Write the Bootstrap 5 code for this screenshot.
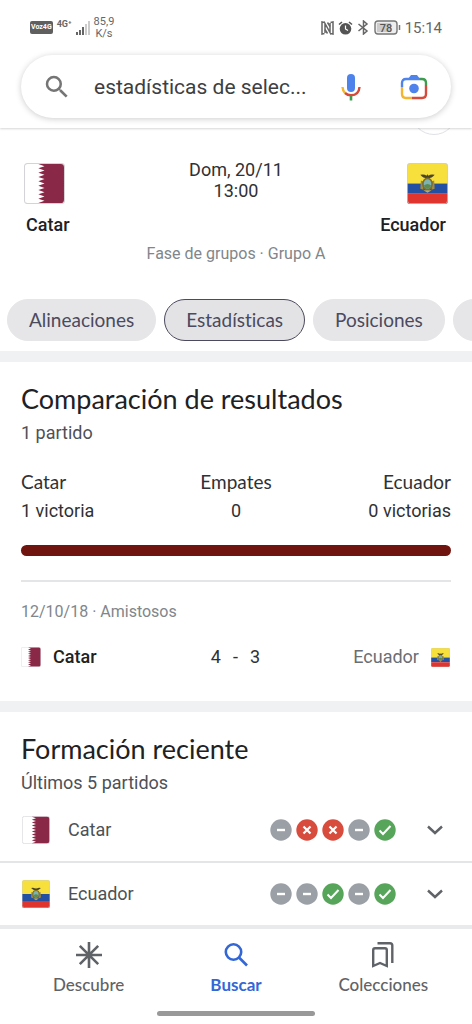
<!DOCTYPE html>
<html lang="es">
<head>
<meta charset="utf-8">
<meta name="viewport" content="width=device-width, initial-scale=1">
<title>Catar - Ecuador: estadísticas</title>
<link href="https://cdn.jsdelivr.net/npm/bootstrap@5.3.0/dist/css/bootstrap.min.css" rel="stylesheet">
<script src="https://cdn.jsdelivr.net/npm/bootstrap@5.3.0/dist/js/bootstrap.bundle.min.js" defer></script>
<style>
  :root { --ink: #202124; --soft: #4d5156; --mute: #80868b; --line: #dfe1e5; --band: #f0f1f3; }
  body { font-family: Roboto, "Liberation Sans", sans-serif; font-size: 18px; line-height: 24px; color: #303134; background: #fff; }
  svg { display: block; flex: none; }
  .geo { font-family: Lato, Roboto, sans-serif; font-size: 19px; font-variant-ligatures: none; }
  .status-bar { height: 55px; padding: 0 30px; color: #666; font-size: 15px; }
  .volte { background: #5f5f5f; color: #fff; font: 700 7px/13px Roboto, sans-serif; border-radius: 2px; padding: 0 1px; }
  .rate { font-size: 11px; line-height: 12px; text-align: center; }
  .net { font: 700 9px/9px Roboto, sans-serif; padding-bottom: 6px; }
  .top-bar { box-shadow: 0 1px 2px rgba(0,0,0,.16); position: relative; z-index: 1; padding-bottom: 10px; }
  .search-pill { height: 63px; margin: 0 21px; border-radius: 32px; padding: 0 23px 0 21px; box-shadow: 0 1px 6px rgba(0,0,0,.2); color: #757575; }
  .search-pill input { font-size: 21px; color: #3c4043; min-width: 0; padding: 0; border: 0; background: none; margin: 0 16px 0 22px; }
  .plain-btn { border: 0; background: none; padding: 0; }
  .camera { margin-left: 39px; }
  .match-head { padding: 31px 24px 0; overflow: hidden; position: relative; }
  .peek { position: absolute; right: 15px; top: -39px; width: 46px; height: 46px; border: 1px solid var(--line); border-radius: 50%; background: #fff; }
  .when { line-height: 21px; }
  .team { font-weight: 500; color: var(--ink); }
  .match-head .team { padding: 9px 2px 0; }
  .stage { font-size: 16px; color: var(--mute); }
  .match-head .stage { margin-top: 5px; }
  .chips { padding: 33px 0 10px 7px; overflow: hidden; }
  .chip { flex: none; height: 42px; border: 1px solid #e6e6e8; border-radius: 21px; padding: 0 21px; background: #e6e6e8; color: #4b4a5e; }
  .chip.active { border-color: #4b4a5e; background: #e3e3e6; }
  .band { height: 11px; background: var(--band); }
  .panel { padding: 21px 21px 0; }
  .title { font-size: 27px; line-height: 32px; color: var(--ink); margin: 0 0 6px; font-weight: 400; }
  .sub { color: var(--soft); }
  .tally { padding-top: 25px; }
  .tally .geo { margin-bottom: 5px; }
  .wins { height: 11px; border-radius: 6px; background: #6f140e; margin: 22px 0 24px; }
  .rule { border-top: 2px solid #e4e5e7; margin-bottom: 18px; }
  .result { padding: 21px 1px 32px 0; }
  .result .d-flex { gap: 12px; }
  .lost { color: #6b6e73; }
  .form-list { padding: 4px 0 0; margin: 0; list-style: none; }
  .form-list li { height: 62px; padding: 0 29px 0 22px; gap: 18px; }
  .form-list li + li { height: 64px; border-top: 2px solid #e4e5e7; }
  .marks { gap: 4px; margin-right: 13px; }
  .tab-bar { border-top: 4px solid #e9eaec; padding: 12px 15px 16px; }
  .tab-bar a { flex: 1 1 0; gap: 6px; color: #5f6368; font-size: 17px; line-height: 20px; font-weight: 500; text-decoration: none; }
  .tab-bar a.active { color: #3367d6; font-weight: 700; }
  .grip { width: 33.5%; height: 5px; border-radius: 3px; background: #999; }
</style>
</head>
<body>
<svg width="0" height="0" class="position-absolute" aria-hidden="true">
  <symbol id="qatar" viewBox="0 0 40 40">
    <rect x=".5" y=".5" width="39" height="39" rx="3" fill="#fff" stroke="#d4d4d8"/>
    <path d="M14 1H36Q39 1 39 4V36Q39 39 36 39H14L20 36.900 14 34.800 20 32.700 14 30.600 20 28.500 14 26.400 20 24.300 14 22.200 20 20 14 17.800 20 15.700 14 13.600 20 11.500 14 9.400 20 7.300 14 5.200 20 3.100Z" fill="#8a2848"/>
  </symbol>
  <symbol id="ecuador" viewBox="0 0 40 40">
    <path d="M0 20V3Q0 0 3 0H37Q40 0 40 3V20Z" fill="#f7e03c"/>
    <path d="M0 20H40V30H0Z" fill="#2450a4"/>
    <path d="M0 30H40V37Q40 40 37 40H3Q0 40 0 37Z" fill="#e0342f"/>
    <rect x=".5" y=".5" width="39" height="39" rx="3" fill="none" stroke="#ccc" stroke-opacity=".7"/>
    <path d="M13 11.500Q17 10.500 19 12.500L20 11L21 12.500Q23 10.500 27 11.500Q24.500 15 20 15Q15.500 15 13 11.500Z" fill="#4c4426"/>
    <path d="M13.500 17L16 18V26L13 25ZM26.500 17L24 18V26L27 25Z" fill="#a08a3c"/>
    <ellipse cx="20" cy="20.500" rx="4.500" ry="5.500" fill="#7fb3b0" stroke="#7c6d35" stroke-width="1.600"/>
    <path d="M16.500 22Q20 19 23.500 22Q22.500 25 20 25Q17.500 25 16.500 22Z" fill="#5d8a4d"/>
    <path d="M16 26.500H24L20 29Z" fill="#c6a94a"/>
  </symbol>
  <symbol id="lens" viewBox="0 0 24 24"><path fill="currentColor" d="M15.500 14h-.79l-.28-.27A6.470 6.470 0 0 0 16 9.500 6.500 6.500 0 1 0 9.500 16c1.610 0 3.090-.59 4.230-1.570l.27.28v.79l5 4.990L20.490 19l-4.990-5zm-6 0a4.500 4.500 0 1 1 0-9 4.500 4.500 0 0 1 0 9z"/></symbol>
  <symbol id="draw" viewBox="0 0 22 22"><circle cx="11" cy="11" r="10.700" fill="#9aa0a6"/><path d="M7 11H15" stroke="#fff" stroke-width="2.400"/></symbol>
  <symbol id="loss" viewBox="0 0 22 22"><circle cx="11" cy="11" r="10.700" fill="#d84c3e"/><path d="M7.500 7.500L14.500 14.500M14.500 7.500L7.500 14.500" stroke="#fff" stroke-width="2.200"/></symbol>
  <symbol id="win" viewBox="0 0 22 22"><circle cx="11" cy="11" r="10.700" fill="#57a55a"/><path d="M5.500 11.500L9 15L16.500 7" fill="none" stroke="#fff" stroke-width="2"/></symbol>
  <symbol id="down" viewBox="0 0 16 10"><path d="M1 1.500L8 8L15 1.500" fill="none" stroke="#5f6368" stroke-width="2.400"/></symbol>
</svg>

<header class="top-bar bg-white">
  <div class="status-bar d-flex justify-content-between align-items-center">
    <div class="d-flex align-items-center gap-1">
      <span class="volte">Voz4G</span>
      <span class="net">4G⁺</span>
      <svg width="14" height="14" viewBox="0 0 14 14"><path d="M0 11h2v3H0zM3 9h2v5H3zM6 6h2v8H6z" fill="#666"/><path d="M9 3h2v11H9zM12 0h2v14h-2z" fill="#ccc"/></svg>
      <span class="rate">85,9<br>K/s</span>
    </div>
    <div class="d-flex align-items-center gap-1">
      <svg width="13" height="14" viewBox="0 0 13 14" fill="none" stroke="#666" stroke-width="1.500"><path d="M3.500 1.500L1 1V13L3.500 12.500M9.500 1.500L12 1V13L9.500 12.500M4 12V2.500L9 11.500V2"/><path d="M6.500 1.500L9 5.500M4 8.500L6.500 12.500"/></svg>
      <svg width="15" height="14" viewBox="0 0 15 14"><circle cx="7.500" cy="7.800" r="5.800" fill="#555"/><path d="M1 3.500L4 1M14 3.500L11 1" stroke="#555" stroke-width="1.600"/><path d="M7.500 4.500V8L10 9.500" fill="none" stroke="#fff" stroke-width="1.200"/></svg>
      <svg width="13" height="15" viewBox="0 0 13 15" fill="none" stroke="#666" stroke-width="1.500"><path d="M1.500 4L10 11L6.500 14V1L10 4L1.500 11"/></svg>
      <svg width="27" height="15" viewBox="0 0 27 15"><rect x="1" y="1" width="22" height="13" rx="3" fill="#eee" stroke="#777" stroke-width="1.400"/><path d="M3 3H17V12H3Z" fill="#ccc"/><path d="M25.500 5V10" stroke="#777" stroke-width="1.500"/><text x="12" y="11.500" text-anchor="middle" font-family="Roboto" font-size="11" font-weight="500" fill="#555">78</text></svg>
      <span>15:14</span>
    </div>
  </div>
  <form class="search-pill d-flex align-items-center bg-white" role="search">
    <svg width="30" height="30"><use href="#lens"/></svg>
    <input class="flex-grow-1" type="text" aria-label="Buscar" value="estadísticas de selec...">
    <button class="plain-btn" type="button" aria-label="Buscar por voz">
      <svg width="20" height="28" viewBox="0 0 20 28" fill="none"><rect x="6" y="1" width="8" height="18" rx="4" fill="#4f83ec"/><path d="M1.500 14Q1.800 18 4 20" stroke="#f2b72f" stroke-width="2.400"/><path d="M4 20Q6.500 22.300 10 22.300Q18 22 18.500 14" stroke="#d64a3b" stroke-width="2.400"/><path d="M10 23V27.500" stroke="#3e9b50" stroke-width="2.600"/></svg>
    </button>
    <button class="plain-btn camera" type="button" aria-label="Buscar con la cámara">
      <svg width="28" height="26" viewBox="0 0 28 26" fill="none" stroke-width="2.400"><path d="M2 13V9Q2 5 6 5H20" stroke="#4f83ec"/><path d="M8 5L11 1H17L20 5V6H8Z" fill="#4f83ec"/><path d="M20 5H22Q26 5 26 9V11" stroke="#3e9b50"/><path d="M26 11V20Q26 24 22 24H12" stroke="#d64a3b"/><path d="M2 13V20Q2 24 6 24H12" stroke="#f2b72f"/><circle cx="14" cy="14.500" r="4.800" fill="#4f83ec"/></svg>
    </button>
  </form>
</header>

<main>
  <section class="match-head">
    <div class="peek"></div>
    <div class="row g-0">
      <div class="col-4 pt-1"><svg width="41" height="41"><use href="#qatar"/></svg><div class="team">Catar</div></div>
      <div class="col-4 text-center when">Dom, 20/11<br>13:00</div>
      <div class="col-4 pt-1 d-flex flex-column align-items-end"><svg width="41" height="41"><use href="#ecuador"/></svg><div class="team">Ecuador</div></div>
    </div>
    <div class="stage text-center">Fase de grupos · Grupo A</div>
  </section>

  <nav class="chips d-flex gap-2" aria-label="Secciones">
    <button class="chip geo" type="button">Alineaciones</button>
    <button class="chip geo active" type="button" aria-current="true">Estadísticas</button>
    <button class="chip geo" type="button">Posiciones</button>
    <button class="chip geo" type="button" aria-label="Más"></button>
  </nav>
  <div class="band"></div>

  <section class="panel">
    <h2 class="geo title">Comparación de resultados</h2>
    <div class="sub">1 partido</div>
    <div class="tally row g-0">
      <div class="col-4"><div class="geo">Catar</div><div>1 victoria</div></div>
      <div class="col-4 text-center"><div class="geo">Empates</div><div>0</div></div>
      <div class="col-4 text-end"><div class="geo">Ecuador</div><div>0 victorias</div></div>
    </div>
    <div class="wins"></div>
    <div class="rule"></div>
    <div class="stage">12/10/18 · Amistosos</div>
    <div class="result row g-0 align-items-center">
      <div class="col-4 d-flex align-items-center team"><svg width="20" height="20"><use href="#qatar"/></svg>Catar</div>
      <div class="col-4 d-flex justify-content-center"><span>4</span><span>-</span><span>3</span></div>
      <div class="col-4 d-flex align-items-center justify-content-end lost">Ecuador<svg width="19" height="19"><use href="#ecuador"/></svg></div>
    </div>
  </section>
  <div class="band"></div>

  <section>
    <div class="panel">
      <h2 class="geo title">Formación reciente</h2>
      <div class="sub">Últimos 5 partidos</div>
    </div>
    <ul class="form-list">
      <li class="d-flex align-items-center">
        <svg width="28" height="28"><use href="#qatar"/></svg>
        <span class="sub me-auto">Catar</span>
        <div class="marks d-flex">
          <svg width="22" height="22"><use href="#draw"/></svg>
          <svg width="22" height="22"><use href="#loss"/></svg>
          <svg width="22" height="22"><use href="#loss"/></svg>
          <svg width="22" height="22"><use href="#draw"/></svg>
          <svg width="22" height="22"><use href="#win"/></svg>
        </div>
        <button class="plain-btn" type="button" aria-label="Ver partidos de Catar"><svg width="16" height="10"><use href="#down"/></svg></button>
      </li>
      <li class="d-flex align-items-center">
        <svg width="28" height="28"><use href="#ecuador"/></svg>
        <span class="sub me-auto">Ecuador</span>
        <div class="marks d-flex">
          <svg width="22" height="22"><use href="#draw"/></svg>
          <svg width="22" height="22"><use href="#draw"/></svg>
          <svg width="22" height="22"><use href="#win"/></svg>
          <svg width="22" height="22"><use href="#draw"/></svg>
          <svg width="22" height="22"><use href="#win"/></svg>
        </div>
        <button class="plain-btn" type="button" aria-label="Ver partidos de Ecuador"><svg width="16" height="10"><use href="#down"/></svg></button>
      </li>
    </ul>
  </section>
</main>

<footer>
  <nav class="tab-bar d-flex" aria-label="Principal">
    <a class="geo d-flex flex-column align-items-center" href="#descubre">
      <svg width="28" height="28" viewBox="0 0 28 28" stroke="currentColor" stroke-width="2.600"><path d="M14 1V27M1 14H27M4.800 4.800L23.200 23.200M23.200 4.800L4.800 23.200"/></svg>
      Descubre
    </a>
    <a class="geo d-flex flex-column align-items-center active" href="#buscar" aria-current="page">
      <svg width="28" height="28" viewBox="0 0 28 28" fill="none" stroke="currentColor" stroke-width="2.600"><circle cx="11.500" cy="11" r="7.700"/><path d="M17 16.500L25 24.500"/></svg>
      Buscar
    </a>
    <a class="geo d-flex flex-column align-items-center" href="#colecciones">
      <svg width="28" height="28" viewBox="0 0 28 28" fill="none" stroke="currentColor" stroke-width="2.400"><path d="M4.200 25V9Q4.200 7.200 6 7.200H16Q17.800 7.200 17.800 9V25L11 22Z"/><path d="M8.500 2.200H21Q23.300 2.200 23.300 4.500V22"/></svg>
      Colecciones
    </a>
  </nav>
  <div class="grip mx-auto"></div>
</footer>
</body>
</html>
